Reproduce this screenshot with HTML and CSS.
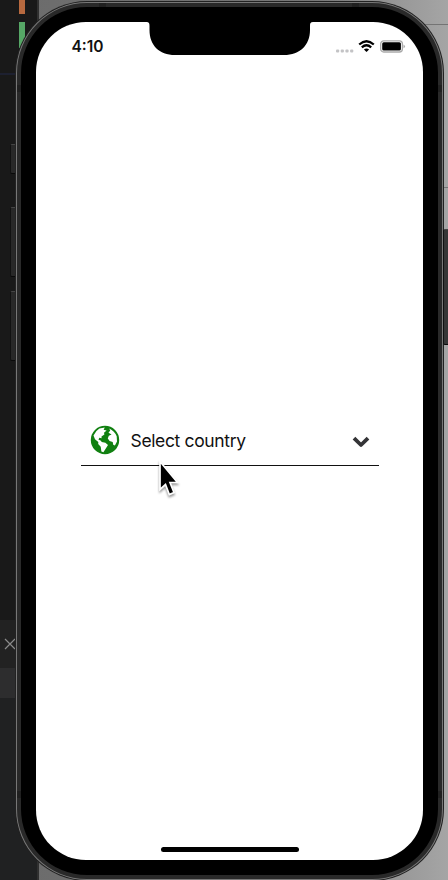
FILE: index.html
```html
<!DOCTYPE html>
<html lang="en">
<head>
<meta charset="utf-8">
<title>Select country</title>
<link rel="stylesheet" href="styles.css">
</head>
<body>
<div class="editor">
  <i class="mark orange"></i><i class="mark green"></i><i class="rule"></i>
  <div class="tab"><svg width="12" height="12" viewBox="0 0 12 12"><path d="M1 1l10 10M11 1L1 11" stroke="#8b8b8b" stroke-width="1.2"/></svg></div>
  <div class="strip"></div>
</div>
<i class="seam top"></i><i class="seam mid"></i>
<i class="key mute"></i><i class="key up"></i><i class="key down"></i><i class="key power"></i>
<div class="phone">
  <i class="band b1"></i><i class="band b2"></i><i class="band b3"></i><i class="band b4"></i><i class="band b5"></i><i class="band b6"></i>
  <main class="screen">
    <header class="status">
      <span class="time">4:10</span>
      <span class="signals">
        <svg width="18" height="4" viewBox="0 0 18 4" class="dots" fill="#c3c3c5"><rect x="0" y=".5" width="3.2" height="3" rx="1"/><rect x="4.7" y=".5" width="3.2" height="3" rx="1"/><rect x="9.4" y=".5" width="3.2" height="3" rx="1"/><rect x="14.1" y=".5" width="3.2" height="3" rx="1"/></svg>
        <svg width="17" height="13" viewBox="0 0 17 13" class="wifi" fill="none" stroke="#000" stroke-width="2.3"><path d="M1.2 4.5Q8.5-1.9 15.8 4.5M3.8 7.3Q8.5 3.3 13.2 7.3"/><path d="M8.5 12L5.9 9.4Q8.5 7.4 11.1 9.4Z" fill="#000" stroke="none"/></svg>
        <svg width="26" height="13" viewBox="0 0 26 13" class="battery"><rect x=".7" y=".8" width="21.7" height="11.2" rx="3" fill="#fff" stroke="#aaa" stroke-width="1.3"/><rect x="2.2" y="2.3" width="18.7" height="8.2" rx="1.5"/><path d="M23.5 4.6q3 1.8 0 3.6z" fill="#aaa"/></svg>
      </span>
    </header>
    <div class="dropdown">
      <svg class="globe" width="30" height="30" viewBox="0 0 30 30"><circle cx="15" cy="15" r="14.2" fill="#118011"/><path fill="#fff" d="M9.4 3.4 14.8 2.6 13.6 4.8 16.6 5.4 14 7.8 14.4 9.5 11.5 11.5 11.6 13.3 9.3 12.7 8.5 14.8 10.6 15.5 11.8 16.9 15.4 17.7 18 20 15.8 23.4 13.4 27.2 11.4 26.4 10.7 21.8 8.2 19 8.3 17 5 14.2 3.5 10.6Q5.4 5.7 9.4 3.4ZM19.2 3.5Q24.6 6.1 26.7 11.2L27 16.5 24.9 20.4 23.2 19.7 22.7 16.9 19.6 16 17.8 13.6 18.8 10.7 21.6 9.4 18.5 7.8 20.2 5.6Z"/></svg>
      <span class="label">Select country</span>
      <svg class="chevron" width="18" height="12" viewBox="0 0 18 12" fill="none" stroke="#343437" stroke-width="3.8" stroke-linejoin="round"><path d="M2 2.1l7 6.9 7-6.9"/></svg>
    </div>
    <div class="home"></div>
  </main>
  <svg class="notch" width="167" height="36" viewBox="0 0 167 36"><path d="M0 0H167V2C164.500 2 164 3 164 6V10C164 25 154 35 138 35H29C13 35 3.500 25 3.500 10V6C3.500 3 3 2 0 2Z"/></svg>
</div>
<svg class="cursor" width="22" height="42" viewBox="0 0 22 42"><path d="M2 2.500V30.500L7.500 25.500 11.300 35.500 16 33.500 12 23.500H19.500Z" fill="#000" stroke="#fff" stroke-width="1.700"/></svg>
</body>
</html>
```
FILE: styles.css
```css
* { box-sizing: border-box; }
body {
  margin: 0;
  width: 448px;
  height: 880px;
  overflow: hidden;
  position: relative;
  background: linear-gradient(90deg, #6b6b6b, #777 70%, #999 90%, #a5a5a5);
  font-family: Inter, "Liberation Sans", sans-serif;
  color: #111;
}
.editor {
  position: absolute;
  inset: 0 auto 0 0;
  width: 39px;
  background: linear-gradient(#191919 0 698px, #202122 698px);
  border-right: 2px solid #303030;
}
.mark, .rule, .tab, .strip, .seam, .key, .band { position: absolute; }
.mark { left: 19px; width: 6px; }
.orange { top: 0; height: 14px; background: #b7693f; }
.green { top: 22px; height: 26px; background: #56a766; }
.rule { top: 73px; width: 37px; height: 2px; background: #1d2030; }
.tab { top: 620px; width: 37px; height: 48px; background: #222; }
.tab svg { display: block; margin: 18px 0 0 4px; }
.strip { top: 668px; width: 37px; height: 30px; background: #2d2d2e; }
.seam { right: 0; width: 18px; height: 1px; background: #747474; }
.seam.top { top: 24px; width: 30px; }
.seam.mid { top: 187px; }
.key { left: 10px; width: 7px; background: #282828; border-top: 1px solid #454545; border-left: 1px solid #111; border-bottom: 1px solid #090909; border-radius: 2px 0 0 2px; }
.mute { top: 144px; height: 30px; }
.up { top: 207px; height: 70px; }
.down { top: 291px; height: 70px; }
.power { left: 443px; top: 229px; height: 116px; background: #363636; z-index: 1; }
.phone {
  position: absolute;
  left: 16px;
  top: 2px;
  width: 427px;
  height: 878px;
  padding: 20px 20px 20px;
  border-radius: 71px;
  background: #000;
  box-shadow: 0 0 0 1px #222, inset 0 0 0 1px #777, inset 0 0 0 5px #292929;
}
.band { background: #202020; }
.b1, .b2 { top: 1px; width: 7px; height: 4px; }
.b1 { left: 83px; }
.b2 { left: 336px; }
.b3, .b4, .b5, .b6 { width: 4px; height: 7px; }
.b3, .b5 { left: 1px; }
.b4, .b6 { right: 1px; }
.b3, .b4 { top: 83px; }
.b5, .b6 { top: 789px; }
.screen {
  display: flex;
  flex-direction: column;
  align-items: center;
  height: 838px;
  background: #fff;
  border-radius: 50px;
}
.status {
  width: 100%;
  height: 50px;
  padding: 0 17px 0 35.5px;
  display: flex;
  align-items: center;
  justify-content: space-between;
}
.time { font-size: 15.5px; font-weight: 600; line-height: 20px; }
.signals { display: flex; align-items: center; margin-top: -1px; }
.dots { margin-top: 9px; }
.wifi { margin-left: 4px; }
.battery { margin-left: 5px; }
.dropdown {
  width: 298px;
  height: 51px;
  margin: 343px 0 0 0;
  padding: 0 9px 0 9px;
  display: flex;
  align-items: center;
  border-bottom: 1px solid #111;
}
.label { margin: 2px 0 0 11px; font-size: 17.5px; letter-spacing: -.35px; line-height: 24px; flex: 1; white-space: nowrap; }
.chevron { margin-top: 3px; }
.home { width: 138px; height: 5px; margin: auto 0 8px; border-radius: 3px; background: #000; }
.notch { position: absolute; left: 130px; top: 18px; }
.cursor { position: absolute; left: 158px; top: 459px; filter: drop-shadow(0 2px 1px #0006); }
```
